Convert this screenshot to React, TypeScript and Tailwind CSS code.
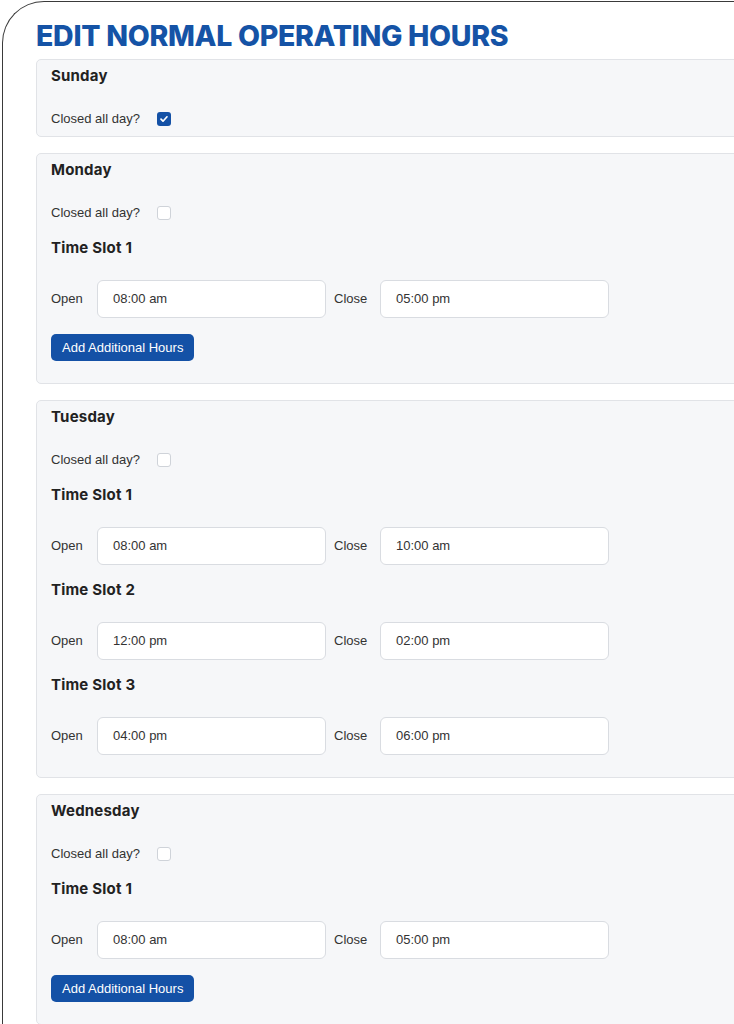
import React from 'react';

type Slot = { open: string; close: string };

type Day = {
  name: string;
  closed: boolean;
  slots: Slot[];
  canAdd?: boolean;
};

const DAYS: Day[] = [
  { name: 'Sunday', closed: true, slots: [] },
  { name: 'Monday', closed: false, slots: [{ open: '08:00 am', close: '05:00 pm' }], canAdd: true },
  {
    name: 'Tuesday',
    closed: false,
    slots: [
      { open: '08:00 am', close: '10:00 am' },
      { open: '12:00 pm', close: '02:00 pm' },
      { open: '04:00 pm', close: '06:00 pm' },
    ],
  },
  { name: 'Wednesday', closed: false, slots: [{ open: '08:00 am', close: '05:00 pm' }], canAdd: true },
];

const heading = { fontFamily: 'Inter, "Noto Sans", sans-serif' };
const body = { fontFamily: '"Liberation Sans", Arial, sans-serif' };

function Checkbox({ checked }: { checked: boolean }) {
  return checked ? (
    <span className="flex h-[14px] w-[14px] items-center justify-center rounded-[3px] bg-[#1451a6]">
      <svg width="10" height="10" viewBox="0 0 10 10" fill="none">
        <path d="M2 5.2l2 2 4-4.4" stroke="white" strokeWidth="1.7" strokeLinecap="round" strokeLinejoin="round" />
      </svg>
    </span>
  ) : (
    <span className="h-[14px] w-[14px] rounded-[3px] border border-[#cfd3d9] bg-white" />
  );
}

function TimeField({ label, value }: { label: string; value: string }) {
  return (
    <div className="flex items-center">
      <span className="w-[46px] text-[13px] text-[#333]">{label}</span>
      <div className="flex h-[38px] w-[229px] items-center rounded-[6px] border border-[#d9dce1] bg-white px-[15px] text-[13px] text-[#333]">
        {value}
      </div>
    </div>
  );
}

function DayCard({ day }: { day: Day }) {
  return (
    <div className="w-[760px] rounded-[5px] border border-[#e1e3e7] bg-[#f6f7f9] px-[14px] pt-[5px] pb-[7px]" style={body}>
      <div className="flex h-[22px] items-center text-[15px] font-bold tracking-[0.2px] text-[#222]" style={heading}>
        {day.name}
      </div>
      <div className="mt-[22px] flex h-[20px] items-center gap-[17px] text-[13px] text-[#333]">
        <span>Closed all day?</span>
        <Checkbox checked={day.closed} />
      </div>
      {day.slots.map((slot, i) => (
        <div key={i}>
          <div className="mt-[14px] flex h-[22px] items-center text-[15px] font-bold tracking-[0.2px] text-[#222]" style={heading}>
            Time Slot {i + 1}
          </div>
          <div className="mt-[21px] flex items-center gap-[8px]">
            <TimeField label="Open" value={slot.open} />
            <TimeField label="Close" value={slot.close} />
          </div>
        </div>
      ))}
      {day.canAdd && (
        <button className="mt-[16px] h-[27px] rounded-[5px] bg-[#1451a6] px-[11px] text-[13px] text-white">
          Add Additional Hours
        </button>
      )}
      {day.slots.length > 0 && <div className="h-[15px]" />}
    </div>
  );
}

export default function App() {
  return (
    <div className="h-[1024px] w-full overflow-hidden bg-white">
      <div className="ml-[2px] mt-[1px] min-h-[1100px] w-[820px] rounded-tl-[42px] border-l-[1.5px] border-t-[1.5px] border-[#3a3a3a] pl-[33px] pt-[16px]">
        <h1 className="text-[28.5px] font-extrabold leading-[36px] tracking-[-0.3px] text-[#1553a6]" style={heading}>
          EDIT NORMAL OPERATING HOURS
        </h1>
        <div className="mt-[5px] flex flex-col gap-[16px]">
          {DAYS.map((d) => (
            <DayCard key={d.name} day={d} />
          ))}
        </div>
      </div>
    </div>
  );
}
